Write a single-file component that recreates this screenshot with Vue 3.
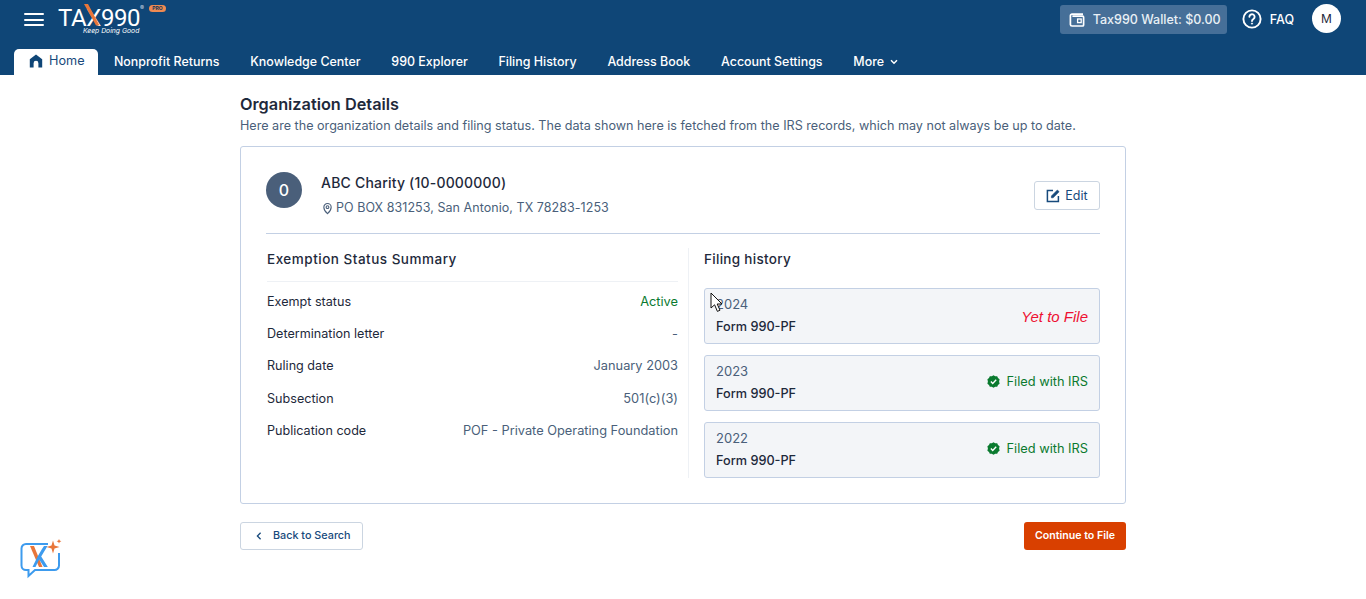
<script setup>
const tabs = ['Nonprofit Returns','Knowledge Center','990 Explorer','Filing History','Address Book','Account Settings']
const rows = [
  { label: 'Exempt status', value: 'Active', cls: 'active' },
  { label: 'Determination letter', value: '-' },
  { label: 'Ruling date', value: 'January 2003' },
  { label: 'Subsection', value: '501(c)(3)' },
  { label: 'Publication code', value: 'POF - Private Operating Foundation' },
]
const filings = [
  { year: '2024', filed: false },
  { year: '2023', filed: true },
  { year: '2022', filed: true },
]
</script>

<template>
  <div class="page">
    <header class="header">
      <div class="top">
        <div class="brand">
          <button class="burger" aria-label="Menu"><span></span><span></span><span></span></button>
          <div class="logo">
            <div class="wordmark">TAX990</div>
            <svg class="x-slash" width="16" height="22" viewBox="0 0 16 22"><path d="M0 0 H4 L15.5 21.5 H12 Z" fill="#e8763a"/></svg>
            <span class="reg">®</span>
            <div class="tag">Keep Doing Good</div>
            <span class="pro">PRO</span>
          </div>
        </div>
        <div class="actions">
          <div class="wallet">
            <svg width="16" height="16" viewBox="0 0 16 16" fill="none" stroke="#fff" stroke-width="1.7"><path d="M14 2.2H3A1.6 1.6 0 0 0 1.4 3.8v8.6A1.6 1.6 0 0 0 3 14h10.6a1 1 0 0 0 1-1V5.2a1 1 0 0 0-1-1H3.4"/><rect x="8.6" y="7" width="3.6" height="3.6" stroke-width="1.3"/></svg>
            <span>Tax990 Wallet: $0.00</span>
          </div>
          <div class="faq">
            <svg width="20" height="20" viewBox="0 0 20 20" fill="none" stroke="#fff" stroke-width="1.9"><circle cx="10" cy="10" r="8.6"/><path d="M7.4 7.8a2.6 2.6 0 1 1 4 2.2c-.9.6-1.4 1-1.4 2.1" stroke-linecap="round"/><circle cx="10" cy="14.6" r=".6" fill="#fff" stroke-width="1"/></svg>
            <span>FAQ</span>
          </div>
          <div class="avatar-m">M</div>
        </div>
      </div>
      <nav class="nav">
        <a class="tab home">
          <svg width="14" height="14" viewBox="0 0 14 14"><path d="M7 .6 13.2 5.2V13.4H9.4V9.2a2.4 2.4 0 0 0-4.8 0v4.2H.8V5.2Z" fill="#0f4677"/></svg>
          Home
        </a>
        <a v-for="t in tabs" :key="t" class="tab">{{ t }}</a>
        <a class="tab">More
          <svg width="8" height="6" viewBox="0 0 8 6" fill="none" stroke="#fff" stroke-width="1.5"><path d="M1 1.2 4 4.2 7 1.2"/></svg>
        </a>
      </nav>
    </header>

    <main class="main">
      <h1 class="title">Organization Details</h1>
      <p class="sub">Here are the organization details and filing status. The data shown here is fetched from the IRS records, which may not always be up to date.</p>

      <section class="card">
        <div class="org">
          <div class="org-left">
            <div class="circle">0</div>
            <div class="org-text">
              <div class="org-name">ABC Charity (10-0000000)</div>
              <div class="org-addr">
                <svg width="11" height="13" viewBox="0 0 12 13" fill="none" stroke="#4a5f7a" stroke-width="1.2"><path d="M6 12.2S2 8.4 2 5a4 4 0 0 1 8 0c0 3.4-4 7.2-4 7.2Z"/><circle cx="6" cy="5" r="1.5"/></svg>
                PO BOX 831253, San Antonio, TX 78283-1253
              </div>
            </div>
          </div>
          <button class="edit">
            <svg width="14" height="14" viewBox="0 0 14 14" fill="none" stroke="#174a7c" stroke-width="1.5"><path d="M7 1.6H1.4v11h11V7"/><path d="M5.4 8.8V7L11.4 1l1.7 1.7-6 6.1Z" fill="#174a7c" stroke-width=".6"/></svg>
            Edit
          </button>
        </div>

        <div class="cols">
          <div class="left">
            <h2 class="col-title left-title">Exemption Status Summary</h2>
            <div v-for="r in rows" :key="r.label" class="row">
              <span class="row-label">{{ r.label }}</span>
              <span class="row-value" :class="r.cls">{{ r.value }}</span>
            </div>
          </div>
          <div class="right">
            <h2 class="col-title right-title">Filing history</h2>
            <div v-for="f in filings" :key="f.year" class="filing">
              <div>
                <div class="year">{{ f.year }}</div>
                <div class="form">Form 990-PF</div>
              </div>
              <div v-if="f.filed" class="filed">
                <svg width="13" height="13" viewBox="0 0 13 13"><path d="M6.5 .3 8.2 1.3 10.2 1.2 11 3 12.6 4.2 12.1 6.5 12.6 8.8 11 10 10.2 11.8 8.2 11.7 6.5 12.7 4.8 11.7 2.8 11.8 2 10 .4 8.8.9 6.5.4 4.2 2 3 2.8 1.2 4.8 1.3Z" fill="#0a7a2f"/><path d="M3.9 6.6 5.7 8.4 9.2 4.8" fill="none" stroke="#fff" stroke-width="1.4"/></svg>
                Filed with IRS
              </div>
              <div v-else class="yet">Yet to File</div>
            </div>
          </div>
        </div>
      </section>

      <div class="footer">
        <button class="back">
          <svg width="6" height="8" viewBox="0 0 6 8" fill="none" stroke="#174a7c" stroke-width="1.3"><path d="M4.6 .8 1.4 4l3.2 3.2"/></svg>
          Back to Search
        </button>
        <button class="cont">Continue to File</button>
      </div>
    </main>

    <svg class="chat" width="42" height="40" viewBox="0 0 42 40" fill="none">
      <path d="M28 5H6A4.5 4.5 0 0 0 1.5 9.5V26.5A4.5 4.5 0 0 0 6 31H8.5V37L15 31H34.5A4.5 4.5 0 0 0 39 26.5V14" stroke="#3d9bee" stroke-width="2"/>
      <path d="M10 7H14L22.5 28H19Z" fill="#e8763a"/>
      <path d="M24 7H27.5L21.2 17.5 27.8 28H24L19.2 20.5 15.5 28H12.5L17.6 17.6 22 10Z" fill="#3d9bee"/>
      <path d="M33 1.5 34.5 6.5 39.5 8 34.5 9.5 33 14.5 31.5 9.5 26.5 8 31.5 6.5Z" fill="#e8763a"/>
      <path d="M39 0 39.7 1.6 41.4 2.3 39.7 3 39 4.6 38.3 3 36.6 2.3 38.3 1.6Z" fill="#e8763a"/>
    </svg>

    <svg class="cursor" width="14" height="21" viewBox="0 0 14 21"><path d="M1 1V16L4.6 12.8 7.4 19.4 10 18.2 7.2 12H12Z" fill="#fff" stroke="#111" stroke-width="1"/></svg>
  </div>
</template>

<style scoped>
* { box-sizing: border-box; }
.page {
  position: relative;
  height: 599px;
  overflow: hidden;
  background: #fff;
  font-family: Inter, "Liberation Sans", sans-serif;
  color: #1e293b;
}
.header { height: 75px; background: #0f4677; display: flex; flex-direction: column; }
.top {
  height: 49px;
  display: flex;
  justify-content: space-between;
  padding: 0 25px 0 24px;
}
.brand { display: flex; align-items: flex-start; }
.burger {
  width: 20px;
  height: 13px;
  margin-top: 13px;
  padding: 0;
  border: 0;
  background: none;
  display: flex;
  flex-direction: column;
  justify-content: space-between;
}
.burger span { display: block; height: 2px; background: #fff; border-radius: 1px; }
.logo { position: relative; margin-left: 14px; width: 110px; height: 40px; }
.wordmark {
  font-family: Roboto, Inter, sans-serif;
  font-size: 24px;
  font-weight: 400;
  color: #fff;
  line-height: 18px;
  margin-top: 9px;
  letter-spacing: -0.4px;
  white-space: nowrap;
}
.x-slash { position: absolute; left: 26px; top: 4px; }
.reg { position: absolute; left: 82px; top: 4px; font-size: 6px; line-height: 8px; color: #cdd9e6; }
.tag {
  position: absolute;
  left: 25px;
  top: 28px;
  font-size: 6.8px;
  line-height: 6px;
  font-style: italic;
  font-weight: 400;
  color: #fff;
  white-space: nowrap;
}
.pro {
  position: absolute;
  left: 91px;
  top: 5px;
  width: 17px;
  height: 7px;
  border-radius: 4px;
  background: #ee8a52;
  color: #10355a;
  font-size: 5px;
  font-weight: 700;
  line-height: 7px;
  text-align: center;
}
.actions { display: flex; align-items: flex-start; }
.wallet {
  margin-top: 5px;
  height: 29px;
  width: 167px;
  padding-left: 9px;
  border-radius: 3px;
  background: #466f98;
  display: flex;
  align-items: center;
  gap: 8px;
  font-size: 12.5px;
  font-weight: 500;
  color: #e9eff5;
}
.faq {
  margin-left: 15px;
  margin-top: 9px;
  display: flex;
  align-items: center;
  gap: 8px;
  color: #fff;
  font-size: 12.5px;
  font-weight: 500;
  height: 20px;
}
.avatar-m {
  margin-left: 18px;
  margin-top: 4px;
  width: 29px;
  height: 29px;
  border-radius: 50%;
  background: #fff;
  color: #1e293b;
  font-size: 12px;
  display: flex;
  align-items: center;
  justify-content: center;
}
.nav { display: flex; height: 26px; padding-left: 14px; }
.tab {
  display: flex;
  align-items: center;
  gap: 6px;
  padding: 0 15.38px 1px;
  color: #fff;
  font-size: 12.45px;
  font-weight: 500;
  white-space: nowrap;
}
.tab.home {
  background: #fff;
  color: #174a7c;
  font-size: 12.7px;
  font-weight: 400;
  border-radius: 5px 5px 0 0;
  width: 84px;
  padding: 0 0 3px 15px;
  margin-right: 0.5px;
}
.main { width: 886px; margin: 0 auto; padding-top: 19px; }
.title { margin: 0; font-size: 16.3px; font-weight: 600; line-height: 20px; color: #1e293b; }
.sub { margin: 3px 0 0; font-size: 12.6px; line-height: 18px; color: #4a5f7a; white-space: nowrap; }
.card {
  margin-top: 11px;
  height: 358px;
  border: 1px solid #c3d0e4;
  border-radius: 3px;
  padding: 0 25px;
}
.org {
  height: 87px;
  border-bottom: 1px solid #c3d0e4;
  display: flex;
  align-items: flex-start;
  justify-content: space-between;
  padding-top: 25px;
}
.org-left { display: flex; align-items: flex-start; gap: 19px; }
.circle {
  width: 36px;
  height: 36px;
  border-radius: 50%;
  background: #4a5f7a;
  color: #fff;
  display: flex;
  align-items: center;
  justify-content: center;
  font-size: 16px;
  font-weight: 500;
}
.org-text { display: flex; flex-direction: column; gap: 8px; margin-top: 2px; }
.org-name { font-size: 14px; font-weight: 450; line-height: 18px; color: #1e293b; letter-spacing: 0.2px; }
.org-addr { display: flex; align-items: center; gap: 3px; font-size: 12.5px; line-height: 16px; color: #4a5f7a; padding-left: 1px; letter-spacing: 0.05px; }
.edit {
  width: 66px;
  height: 29px;
  margin-top: 9px;
  border: 1px solid #cbd5e1;
  border-radius: 3px;
  background: #fff;
  color: #174a7c;
  font: 400 12.5px Inter, sans-serif;
  display: flex;
  align-items: center;
  justify-content: center;
  gap: 5px;
  padding: 0;
}
.cols { display: flex; margin-top: 14px; height: 230px; }
.left { width: 423px; padding: 0 10px 0 1px; border-right: 1px solid #eef1f5; }
.right { width: 411px; padding-left: 15px; }
.col-title { margin: 0; font-size: 13.5px; font-weight: 450; line-height: 22px; color: #1e293b; letter-spacing: 0.5px; }
.left-title { height: 34px; border-bottom: 1px solid #eef1f5; margin-bottom: 3px; }
.right-title { margin-bottom: 18px; letter-spacing: 0.3px; }
.row {
  display: flex;
  justify-content: space-between;
  align-items: center;
  height: 32.3px;
  font-size: 12.6px;
}
.row-label { color: #1e293b; }
.row-value { color: #4a5f7a; font-size: 12.8px; }
.row-value.active { color: #0a7a2f; font-weight: 400; }
.filing {
  height: 56px;
  margin-bottom: 11px;
  border: 1px solid #c3d0e4;
  border-radius: 3px;
  background: #f3f5f8;
  padding: 6px 11px 0;
  display: flex;
  justify-content: space-between;
  align-items: center;
}
.year { font-size: 13px; line-height: 18px; color: #4a5f7a; margin-top: -8px; }
.form { font-size: 12.7px; font-weight: 500; line-height: 18px; margin-top: 5px; color: #1e293b; }
.filed { display: flex; align-items: center; gap: 7px; color: #0a7a2f; font-size: 12.8px; margin-top: -9px; }
.yet { color: #ee1133; font-size: 15px; font-style: italic; font-family: "Liberation Sans", sans-serif; margin-top: -6px; }
.footer { margin-top: 18px; display: flex; justify-content: space-between; }
.back {
  width: 123px;
  height: 28px;
  border: 1px solid #cbd5e1;
  border-radius: 3px;
  background: #fff;
  color: #174a7c;
  font: 500 10.8px Inter, sans-serif;
  display: flex;
  align-items: center;
  gap: 11px;
  padding: 0 0 1px 15px;
}
.cont {
  width: 102px;
  height: 28px;
  border: 0;
  border-radius: 3px;
  background: #d94000;
  color: #fff;
  font: 600 10.6px Inter, sans-serif;
  padding: 0 0 1px;
}
.chat { position: absolute; left: 20px; top: 539px; }
.cursor { position: absolute; left: 710px; top: 292px; }
</style>
